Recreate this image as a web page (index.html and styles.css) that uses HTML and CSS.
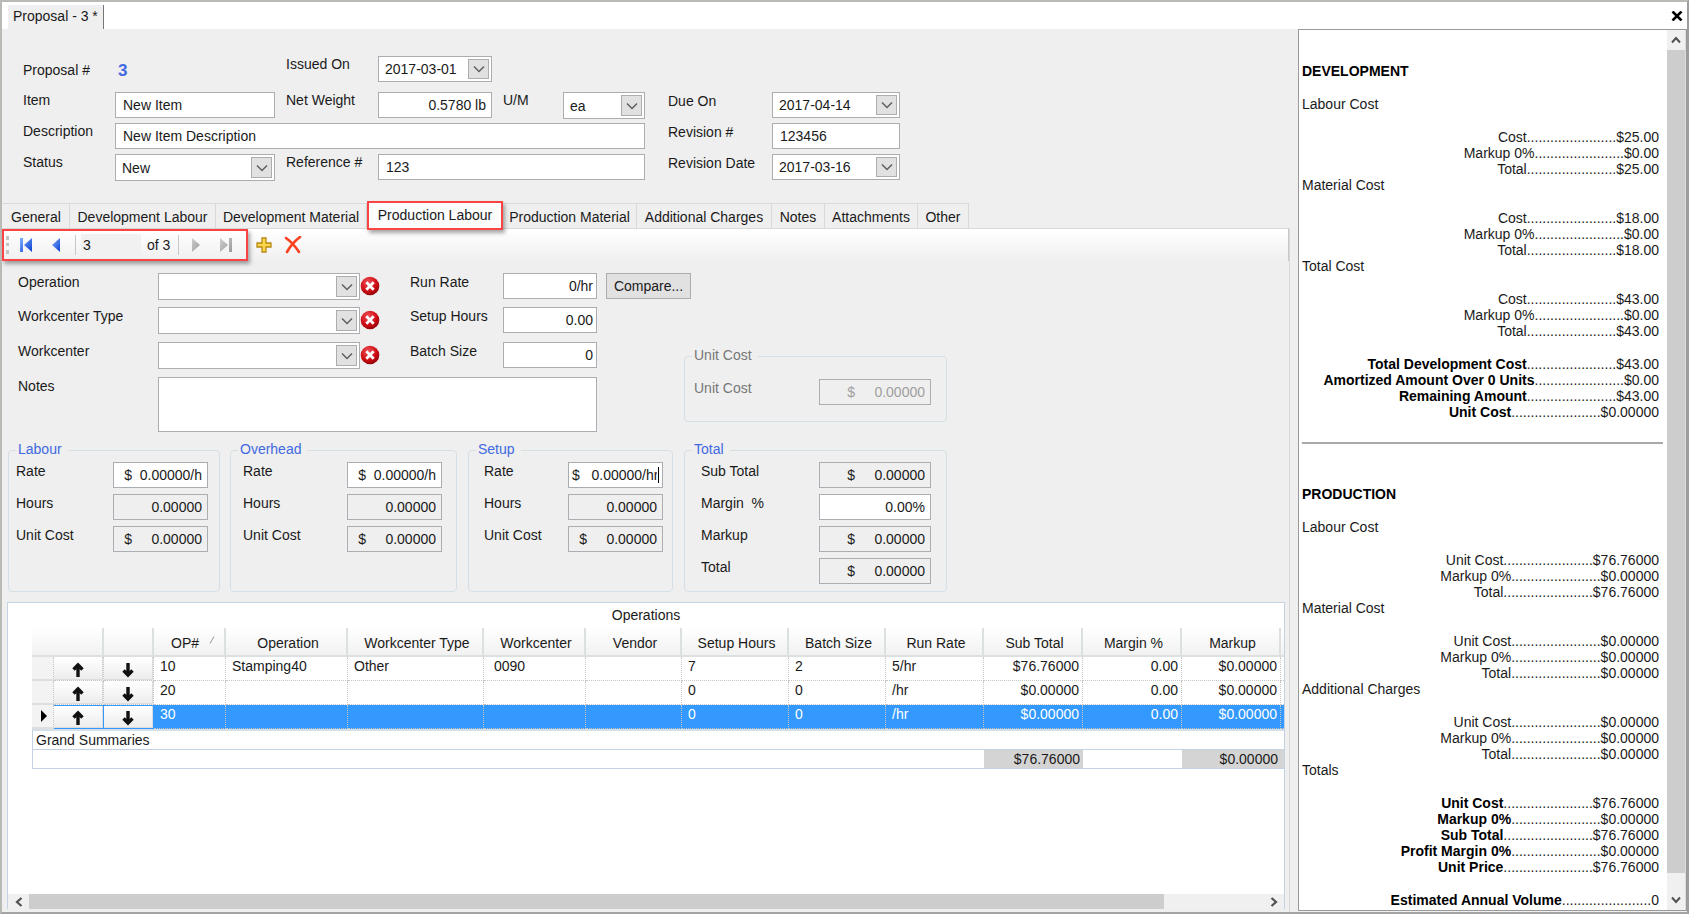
FILE: index.html
```html
<!DOCTYPE html>
<html lang="en">
<head>
<meta charset="utf-8">
<title>Proposal - 3</title>
<link rel="stylesheet" href="styles.css">
</head>
<body>
<svg class="defs" aria-hidden="true">
  <defs>
    <linearGradient id="blue" x1="0" y1="0" x2="1" y2="1"><stop offset="0" stop-color="#7fb0ff"/><stop offset="1" stop-color="#0b3fd0"/></linearGradient>
    <linearGradient id="grey" x1="0" y1="0" x2="1" y2="1"><stop offset="0" stop-color="#cfcfcf"/><stop offset="1" stop-color="#9a9a9a"/></linearGradient>
    <radialGradient id="red" cx=".4" cy=".3" r=".75"><stop offset="0" stop-color="#f0505a"/><stop offset=".6" stop-color="#cf0d14"/><stop offset="1" stop-color="#8c0306"/></radialGradient>
    <symbol id="chev" viewBox="0 0 12 8"><path d="M1 1.500 6 6.500 11 1.500" fill="none" stroke="#606060" stroke-width="1.500"/></symbol>
    <symbol id="clear" viewBox="0 0 20 20"><circle cx="10" cy="10" r="9.300" fill="url(#red)"/><path d="M6.300 6.300 13.700 13.700M13.700 6.300 6.300 13.700" stroke="#fff" stroke-width="2.800"/></symbol>
    <symbol id="up" viewBox="0 0 14 16"><path d="M7 15V4M2.500 7.500 7 3 11.500 7.500" fill="none" stroke="#111" stroke-width="3.400"/></symbol>
    <symbol id="down" viewBox="0 0 14 16"><path d="M7 1V12M2.500 8.500 7 13 11.500 8.500" fill="none" stroke="#111" stroke-width="3.400"/></symbol>
  </defs>
</svg>
<div class="window">
  <header class="titlebar">
    <a class="doc-tab" href="#">Proposal - 3 *</a>
    <button class="close" aria-label="Close"><svg width="12" height="10" viewBox="0 0 12 10"><path d="M1.500 .5 10.500 9.500M10.500 .5 1.500 9.500" stroke="#000" stroke-width="2.600"/></svg></button>
  </header>
  <div class="workspace">
    <main class="main">
      <form class="head-form">
        <span class="low">Proposal #</span><strong class="number">3</strong>
        <label class="c3" for="issued">Issued On</label>
        <div class="combo c4"><input id="issued" value="2017-03-01"><button type="button" class="arrow" aria-label="Open calendar"><svg><use href="#chev"/></svg></button></div>

        <label class="c1" for="item">Item</label><input class="box" id="item" value="New Item">
        <label class="c3" for="weight">Net Weight</label><input class="box num" id="weight" value="0.5780 lb">
        <label class="c5" for="um">U/M</label>
        <div class="combo tall"><select id="um"><option>ea</option></select><span class="arrow"><svg><use href="#chev"/></svg></span></div>
        <label class="c7" for="due">Due On</label>
        <div class="combo"><input id="due" value="2017-04-14"><button type="button" class="arrow" aria-label="Open calendar"><svg><use href="#chev"/></svg></button></div>

        <label class="c1" for="desc">Description</label><input class="box wide5" id="desc" value="New Item Description">
        <label class="c7" for="rev">Revision #</label><input class="box" id="rev" value="123456">

        <label class="c1" for="status">Status</label>
        <div class="combo tall"><select id="status"><option>New</option></select><span class="arrow"><svg><use href="#chev"/></svg></span></div>
        <label class="c3" for="ref">Reference #</label><input class="box wide3" id="ref" value="123">
        <label class="c7" for="revdate">Revision Date</label>
        <div class="combo"><input id="revdate" value="2017-03-16"><button type="button" class="arrow" aria-label="Open calendar"><svg><use href="#chev"/></svg></button></div>
      </form>

      <nav class="tabs">
        <a href="#">General</a><a href="#">Development Labour</a><a href="#">Development Material</a><a href="#" class="active marked" aria-current="page">Production Labour</a><a href="#">Production Material</a><a href="#">Additional Charges</a><a href="#">Notes</a><a href="#">Attachments</a><a href="#">Other</a>
      </nav>

      <section class="page">
        <div class="toolbar">
          <div class="navigator marked">
            <span class="grip"></span>
            <button aria-label="First"><svg width="14" height="16" viewBox="0 0 14 16"><path d="M1 1h3v14H1zM13 1v14L5 8z" fill="url(#blue)"/></svg></button>
            <button aria-label="Previous"><svg width="14" height="16" viewBox="0 0 14 16"><path d="M11 1v14L3 8z" fill="url(#blue)"/></svg></button>
            <span class="sep"></span>
            <input class="position" aria-label="Position" value="3">
            <span class="count">of 3</span>
            <span class="sep"></span>
            <button aria-label="Next"><svg width="14" height="16" viewBox="0 0 14 16"><path d="M3 1v14L11 8z" fill="url(#grey)"/></svg></button>
            <button aria-label="Last"><svg width="14" height="16" viewBox="0 0 14 16"><path d="M1 1v14L9 8zM10 1h3v14h-3z" fill="url(#grey)"/></svg></button>
          </div>
          <button aria-label="Add"><svg width="18" height="18" viewBox="0 0 18 18"><path d="M7 2h4v5h5v4h-5v5H7v-5H2V7h5z" fill="#fbd54a" stroke="#b98a14" stroke-width="1.300"/></svg></button>
          <button aria-label="Delete"><svg width="18" height="18" viewBox="0 0 18 18"><path d="M2 2Q9 7 15 16M16 1Q8 7 3 16" fill="none" stroke="#f9401f" stroke-width="2.600" stroke-linecap="round"/></svg></button>
        </div>

        <div class="panels">
          <form class="op-form">
            <label for="op">Operation</label>
            <div class="combo tall"><select id="op"><option></option></select><span class="arrow"><svg><use href="#chev"/></svg></span></div>
            <button type="button" class="clear" aria-label="Clear operation"><svg><use href="#clear"/></svg></button>
            <label for="run">Run Rate</label><input class="box num" id="run" value="0/hr">
            <button type="button" class="compare">Compare...</button>

            <label for="wct">Workcenter Type</label>
            <div class="combo tall"><select id="wct"><option></option></select><span class="arrow"><svg><use href="#chev"/></svg></span></div>
            <button type="button" class="clear" aria-label="Clear workcenter type"><svg><use href="#clear"/></svg></button>
            <label for="setup">Setup Hours</label><input class="box num" id="setup" value="0.00">

            <label class="first" for="wc">Workcenter</label>
            <div class="combo tall"><select id="wc"><option></option></select><span class="arrow"><svg><use href="#chev"/></svg></span></div>
            <button type="button" class="clear" aria-label="Clear workcenter"><svg><use href="#clear"/></svg></button>
            <label for="batch">Batch Size</label><input class="box num" id="batch" value="0">

            <label class="first" for="notes">Notes</label><textarea class="box notes" id="notes"></textarea>
          </form>

          <fieldset class="group unit" disabled>
            <legend>Unit Cost</legend>
            <div class="fields"><label for="uc">Unit Cost</label><input class="box num" id="uc" value="$     0.00000"></div>
          </fieldset>

          <fieldset class="group labour">
            <legend>Labour</legend>
            <div class="fields">
              <label for="l1">Rate</label><input class="box num" id="l1" value="$  0.00000/h">
              <label for="l2">Hours</label><input class="box num" id="l2" value="0.00000" readonly>
              <label for="l3">Unit Cost</label><input class="box num" id="l3" value="$     0.00000" readonly>
            </div>
          </fieldset>
          <fieldset class="group overhead">
            <legend>Overhead</legend>
            <div class="fields">
              <label for="o1">Rate</label><input class="box num" id="o1" value="$  0.00000/h">
              <label for="o2">Hours</label><input class="box num" id="o2" value="0.00000" readonly>
              <label for="o3">Unit Cost</label><input class="box num" id="o3" value="$     0.00000" readonly>
            </div>
          </fieldset>
          <fieldset class="group setup">
            <legend>Setup</legend>
            <div class="fields">
              <label for="s1">Rate</label><div class="editing"><input class="box num" id="s1" value="$   0.00000/hr"></div>
              <label for="s2">Hours</label><input class="box num" id="s2" value="0.00000" readonly>
              <label for="s3">Unit Cost</label><input class="box num" id="s3" value="$     0.00000" readonly>
            </div>
          </fieldset>
          <fieldset class="group total">
            <legend>Total</legend>
            <div class="fields">
              <label for="t1">Sub Total</label><input class="box num" id="t1" value="$     0.00000" readonly>
              <label for="t2">Margin&nbsp; %</label><input class="box num" id="t2" value="0.00%">
              <label for="t3">Markup</label><input class="box num" id="t3" value="$     0.00000" readonly>
              <label for="t4">Total</label><input class="box num" id="t4" value="$     0.00000" readonly>
            </div>
          </fieldset>
        </div>

        <div class="grid-panel">
          <div class="grid-body">
            <table>
              <caption>Operations</caption>
              <colgroup><col class="w22"><col class="w50"><col class="w50"><col class="w72"><col class="w122"><col class="w136"><col class="w102"><col class="w96"><col class="w107"><col class="w97"><col class="w98"><col class="w99"><col class="w99"><col class="w99"><col></colgroup>
              <thead>
                <tr><th colspan="2"></th><th></th><th class="sorted">OP# <svg width="6" height="8" viewBox="0 0 6 8"><path d="M1 7.500 5 .5" stroke="#999"/></svg></th><th>Operation</th><th>Workcenter Type</th><th>Workcenter</th><th>Vendor</th><th>Setup Hours</th><th>Batch Size</th><th>Run Rate</th><th>Sub Total</th><th>Margin %</th><th>Markup</th><th class="rest"></th></tr>
              </thead>
              <tbody>
                <tr><td class="ind"></td><td class="act"><button aria-label="Move up"><svg><use href="#up"/></svg></button></td><td class="act"><button aria-label="Move down"><svg><use href="#down"/></svg></button></td><td>10</td><td>Stamping40</td><td>Other</td><td class="code">0090</td><td></td><td>7</td><td>2</td><td>5/hr</td><td class="r">$76.76000</td><td class="r">0.00</td><td class="r">$0.00000</td><td class="rest"></td></tr>
                <tr><td class="ind"></td><td class="act"><button aria-label="Move up"><svg><use href="#up"/></svg></button></td><td class="act"><button aria-label="Move down"><svg><use href="#down"/></svg></button></td><td>20</td><td></td><td></td><td></td><td></td><td>0</td><td>0</td><td>/hr</td><td class="r">$0.00000</td><td class="r">0.00</td><td class="r">$0.00000</td><td class="rest"></td></tr>
                <tr class="selected"><td class="ind"><svg width="8" height="12" viewBox="0 0 8 12"><path d="M1 0v12L7 6z" fill="#000"/></svg></td><td class="act"><button aria-label="Move up"><svg><use href="#up"/></svg></button></td><td class="act"><button aria-label="Move down"><svg><use href="#down"/></svg></button></td><td>30</td><td></td><td></td><td></td><td></td><td>0</td><td>0</td><td>/hr</td><td class="r">$0.00000</td><td class="r">0.00</td><td class="r">$0.00000</td><td class="rest"></td></tr>
              </tbody>
              <tfoot>
                <tr><td class="grand" colspan="15">Grand Summaries</td></tr>
                <tr><td class="lead" colspan="11"></td><td class="r sum">$76.76000</td><td></td><td class="r sum">$0.00000</td><td class="sum"></td></tr>
              </tfoot>
            </table>
          </div>
          <div class="hscroll">
            <button aria-label="Scroll left"><svg width="8" height="10" viewBox="0 0 8 10"><path d="M6.500 1 2 5 6.500 9" fill="none" stroke="#505050" stroke-width="2.200"/></svg></button>
            <div class="track"><div class="thumb"></div></div>
            <button aria-label="Scroll right"><svg width="8" height="10" viewBox="0 0 8 10"><path d="M1.500 1 6 5 1.500 9" fill="none" stroke="#505050" stroke-width="2.200"/></svg></button>
          </div>
        </div>
      </section>
    </main>

    <aside class="summary">
      <div class="report">
        <h2>DEVELOPMENT</h2>
        <section><h3>Labour Cost</h3><p>Cost.......................$25.00</p><p>Markup 0%.......................$0.00</p><p>Total.......................$25.00</p></section>
        <section><h3>Material Cost</h3><p>Cost.......................$18.00</p><p>Markup 0%.......................$0.00</p><p>Total.......................$18.00</p></section>
        <section><h3>Total Cost</h3><p>Cost.......................$43.00</p><p>Markup 0%.......................$0.00</p><p>Total.......................$43.00</p></section>
        <section class="bold"><p><b>Total Development Cost</b>.......................$43.00</p><p><b>Amortized Amount Over 0 Units</b>.......................$0.00</p><p><b>Remaining Amount</b>.......................$43.00</p><p><b>Unit Cost</b>.......................$0.00000</p></section>
        <hr>
        <h2>PRODUCTION</h2>
        <section><h3>Labour Cost</h3><p>Unit Cost.......................$76.76000</p><p>Markup 0%.......................$0.00000</p><p>Total.......................$76.76000</p></section>
        <section><h3>Material Cost</h3><p>Unit Cost.......................$0.00000</p><p>Markup 0%.......................$0.00000</p><p>Total.......................$0.00000</p></section>
        <section><h3>Additional Charges</h3><p>Unit Cost.......................$0.00000</p><p>Markup 0%.......................$0.00000</p><p>Total.......................$0.00000</p></section>
        <section><h3>Totals</h3><p><b>Unit Cost</b>.......................$76.76000</p><p><b>Markup 0%</b>.......................$0.00000</p><p><b>Sub Total</b>.......................$76.76000</p><p><b>Profit Margin 0%</b>.......................$0.00000</p><p><b>Unit Price</b>.......................$76.76000</p></section>
        <section class="bold"><p><b>Estimated Annual Volume</b>.......................0</p></section>
      </div>
      <div class="vscroll">
        <button aria-label="Scroll up"><svg width="10" height="8" viewBox="0 0 10 8"><path d="M1 6.500 5 2 9 6.500" fill="none" stroke="#505050" stroke-width="2"/></svg></button>
        <div class="track"><div class="thumb"></div></div>
        <button aria-label="Scroll down"><svg width="10" height="8" viewBox="0 0 10 8"><path d="M1 1.500 5 6 9 1.500" fill="none" stroke="#505050" stroke-width="2"/></svg></button>
      </div>
    </aside>
  </div>
</div>
</body>
</html>
```

FILE: styles.css
```css
* { box-sizing: border-box; }
body, button, input, select, textarea {
  font: 14px/16px "Liberation Sans", Arial, sans-serif;
  color: #1a1a1a;
}
body { margin: 0; background: #efefef; }
a { color: inherit; text-decoration: none; }
button { padding: 0; border: 0; background: none; }
p, h2, h3 { margin: 0; font-size: 14px; }
.defs { position: absolute; width: 0; height: 0; }

.window {
  display: flex;
  flex-direction: column;
  height: 100vh;
  border: 2px solid #b9b9b5;
  border-right-color: #9d9d9d;
  border-bottom-color: #a3a3a3;
}
.titlebar {
  display: flex;
  flex: none;
  justify-content: space-between;
  height: 27px;
  padding: 3px 4px 0 6px;
  background: #fff;
}
.doc-tab { padding: 3px 5px 0 5px; background: #efefef; border-right: 1px solid #777; }
.close { align-self: flex-start; padding: 3px 0; height: 20px; }
.workspace { display: flex; flex: 1; min-height: 0; }
.main { display: flex; flex: 1; flex-direction: column; min-width: 0; padding-right: 8px; overflow: hidden; }

/* fields */
.box, .combo { height: 26px; min-width: 0; width: 100%; background: #fff; border: 1px solid #abadb3; }
.box { display: block; margin: 0; padding: 0 6px 0 7px; border-radius: 0; outline: 0; }
.num { padding: 0 5px 0 3px; text-align: right; }
.box[readonly], .box:disabled { background: #efefef; }
.box:disabled { color: #a0a0a0; }
.combo { position: relative; }
.combo.tall { height: 27px; }
.combo input, .combo select {
  display: block;
  width: 100%;
  height: 100%;
  margin: 0;
  padding: 0 26px 0 6px;
  border: 0;
  outline: 0;
  background: none;
  appearance: none;
}
.arrow {
  position: absolute;
  top: 2px;
  right: 2px;
  bottom: 2px;
  display: flex;
  align-items: center;
  justify-content: center;
  width: 21px;
  background: #e1e1e1;
  border: 1px solid #adadad;
  pointer-events: none;
}
.arrow svg { width: 12px; height: 8px; }

.head-form {
  display: grid;
  grid-template-columns: 92px 160px 103px 114px 71px 82px 127px 128px;
  grid-template-rows: 36px 31px 31px 27px;
  align-items: start;
  flex: none;
  padding: 27px 0 22px 21px;
}
.low { padding-top: 6px; }
.number { padding: 5px 0 0 3px; font-size: 17px; line-height: 20px; color: #4169e1; }
.c1 { grid-column: 1; }
.c3 { padding-left: 11px; }
.c4 { grid-column: 4; }
.c5 { padding-left: 11px; }
.c7 { grid-column: 7; padding: 1px 0 0 23px; }
.wide5 { grid-column: span 5; }
.wide3 { grid-column: span 3; }

.marked { position: relative; z-index: 1; border: 2px solid #fb4343; box-shadow: 2px 3px 4px rgba(0, 0, 0, .35); }

.tabs {
  display: grid;
  grid-template-columns: 67px 146px 151px 136px 134px 135px 53px 93px 51px;
  flex: none;
  height: 25px;
  text-align: center;
  padding-left: 1px;
}
.tabs a { padding-top: 5px; border: solid #d9d9d9; border-width: 1px 1px 0 0; }
.tabs .active { height: 29px; margin-top: -2px; padding-top: 4px; background: #fcfcfc; border: 2px solid #fb4343; }

.page {
  display: flex;
  flex: 1;
  flex-direction: column;
  min-height: 0;
  border: solid #d9d9d9;
  border-width: 1px 1px 0 0;
}
.toolbar {
  display: flex;
  flex: none;
  align-items: center;
  gap: 11px;
  height: 32px;
  margin-bottom: 2px;
  background: linear-gradient(#fff, #efefef);
  border-right: 1px solid #c8c8c8;
}
.navigator { display: flex; flex: none; align-items: center; align-self: flex-start; width: 246px; height: 32px; padding-left: 2px; }
.navigator button { margin-left: 10px; height: 16px; }
.toolbar svg { display: block; }
.navigator + button { margin-left: -4px; }
.grip { width: 3px; height: 18px; border-left: 3px dotted #c4c4c4; }
.navigator button + button { margin-left: 16px; }
.sep { width: 1px; height: 20px; margin: 0 5px 0 12px; background: #c8c8c8; }
.position { width: 60px; height: 22px; padding: 0 2px; border: 0; background: #f1f1f1; }
.count { padding-left: 6px; }
.count + .sep { margin: 0 0 0 8px; }

.panels {
  display: grid;
  grid-template-columns: 222px 238px 216px 263px;
  flex: none;
  row-gap: 9px;
  padding: 10px 0 10px 6px;
}
.op-form {
  display: grid;
  grid-area: 1 / 1 / 2 / 5;
  grid-template-columns: 140px 202px 50px 93px 94px 94px;
  grid-template-rows: 34px 35px 35px 55px;
  align-items: start;
  padding-left: 10px;
}
.op-form label { padding-top: 1px; }
.op-form .num { padding-right: 3px; }
.op-form .first { grid-column: 1; }
.clear { justify-self: start; height: 26px; }
.clear svg { display: block; width: 20px; height: 20px; }
.compare { justify-self: end; width: 85px; height: 26px; border: 1px solid #adadad; background: #e1e1e1; }
.notes { grid-column: 2 / 6; height: 55px; resize: none; }

.group { min-width: 0; margin: 0 10px 0 0; padding: 0 7px; border: 1px solid #d5e0e6; border-radius: 4px; }
.group legend { height: 18px; padding: 0 6px 0 2px; color: #4169e1; }
.fields { display: grid; grid-template-columns: 1fr 95px; gap: 6px 0; padding: 3px 4px 7px 0; }
.fields label { padding-top: 1px; }
.overhead { margin-right: 11px; }
.overhead .fields { padding-left: 5px; padding-right: 7px; }
.setup { margin-right: 11px; }
.setup .fields { padding-left: 8px; padding-right: 2px; }
.total, .unit { margin-right: 0; }
.total .fields { grid-template-columns: 1fr 112px; padding-left: 9px; padding-right: 8px; }
.unit { grid-area: 1 / 4; align-self: end; margin-bottom: 10px; color: #777; }
.unit legend, .unit label { color: #777; }
.unit .fields { grid-template-columns: 1fr 112px; padding: 14px 8px 16px 2px; }
.editing { position: relative; }
.editing::after { content: ""; position: absolute; top: 5px; right: 4px; width: 1px; height: 16px; background: #000; }

.grid-panel {
  display: flex;
  flex: 1;
  flex-direction: column;
  min-height: 0;
  margin: 0 4px 3px 5px;
  background: #fff;
  border: 1px solid #c3d3e3;
  border-bottom: 0;
}
.grid-body { flex: 1; min-height: 0; overflow: hidden; }
table { width: calc(100% - 24px); margin-left: 24px; table-layout: fixed; border-collapse: separate; border-spacing: 0; }
caption { height: 25px; padding: 4px 24px 0 0; }
.w22 { width: 22px; } .w50 { width: 50px; } .w72 { width: 72px; } .w122 { width: 122px; }
.w136 { width: 136px; } .w102 { width: 102px; } .w96 { width: 96px; } .w107 { width: 107px; }
.w97 { width: 97px; } .w98 { width: 98px; } .w99 { width: 99px; }
th {
  height: 29px;
  padding: 2px 0 0 4px;
  font-weight: normal;
  background: linear-gradient(#fff, #f1f1f1);
  border: solid #dbe1e1;
  border-width: 0 2px 2px 0;
}
.sorted { padding-left: 8px; }
.sorted svg { margin: 0 0 4px 6px; }
th.rest { border-right: 0; }
tbody td { height: 24px; padding: 1px 3px 0 6px; vertical-align: top; border: dotted #c6c6c6; border-width: 0 1px 1px 0; }
.r { text-align: right; }
tbody .code { padding-left: 10px; }
tbody .rest { border-right: 0; }
tbody .ind { padding: 5px 0 0 8px; background: #f3f3f3; border-bottom: 2px solid #dedede; }
tbody .act { padding: 0; background: #f3f3f3; }
.act button { display: block; width: 100%; height: 23px; background: linear-gradient(#fff, #ededed); border: solid #dcdcdc; border-width: 0 1px 1px 0; }
.act svg { display: block; width: 14px; height: 16px; margin: 3px auto 0; }
.ind svg { display: block; }
.selected td:not(.ind) { color: #fff; background: #3399ff; }
.selected .act { border-color: #3399ff; border-top-width: 1px; }
.selected .act button { height: 22px; }
tfoot td { height: 19px; padding: 0 3px; border-bottom: 1px solid #c3d3e3; }
tfoot .grand { height: 21px; border-top: 2px solid #d5dfe8; border-left: 1px solid #c3d3e3; }
tfoot .lead { border-left: 1px solid #c3d3e3; }
tfoot .sum { background: #d4d4d4; }

.hscroll { display: flex; flex: none; height: 15px; background: #f0f0f0; }
.hscroll button { width: 21px; }
.vscroll button { height: 20px; }
.hscroll svg, .vscroll svg { display: block; margin: auto; }
.track { flex: 1; }
.thumb { background: #cdcdcd; }
.hscroll .thumb { width: 92%; height: 100%; }

.summary { display: flex; flex: none; width: 389px; margin-bottom: 1px; background: #fff; border: 1px solid #999; }
.report { flex: 1; min-width: 0; padding: 33px 4px 0 3px; overflow: hidden; }
.report h2 { margin-bottom: 17px; color: #000; }
.report h3 { margin-bottom: 17px; font-weight: normal; }
.report p { padding-right: 4px; text-align: right; white-space: nowrap; }
.report .bold { padding-top: 17px; }
.report hr { margin: 22px 0 42px; border: 0; border-top: 2px solid #a9a9a9; }
.report b { color: #000; }
.vscroll { display: flex; flex: none; flex-direction: column; width: 19px; background: #f0f0f0; border-right: 1px solid #ddd; }
.vscroll .thumb { height: 98%; }
```
